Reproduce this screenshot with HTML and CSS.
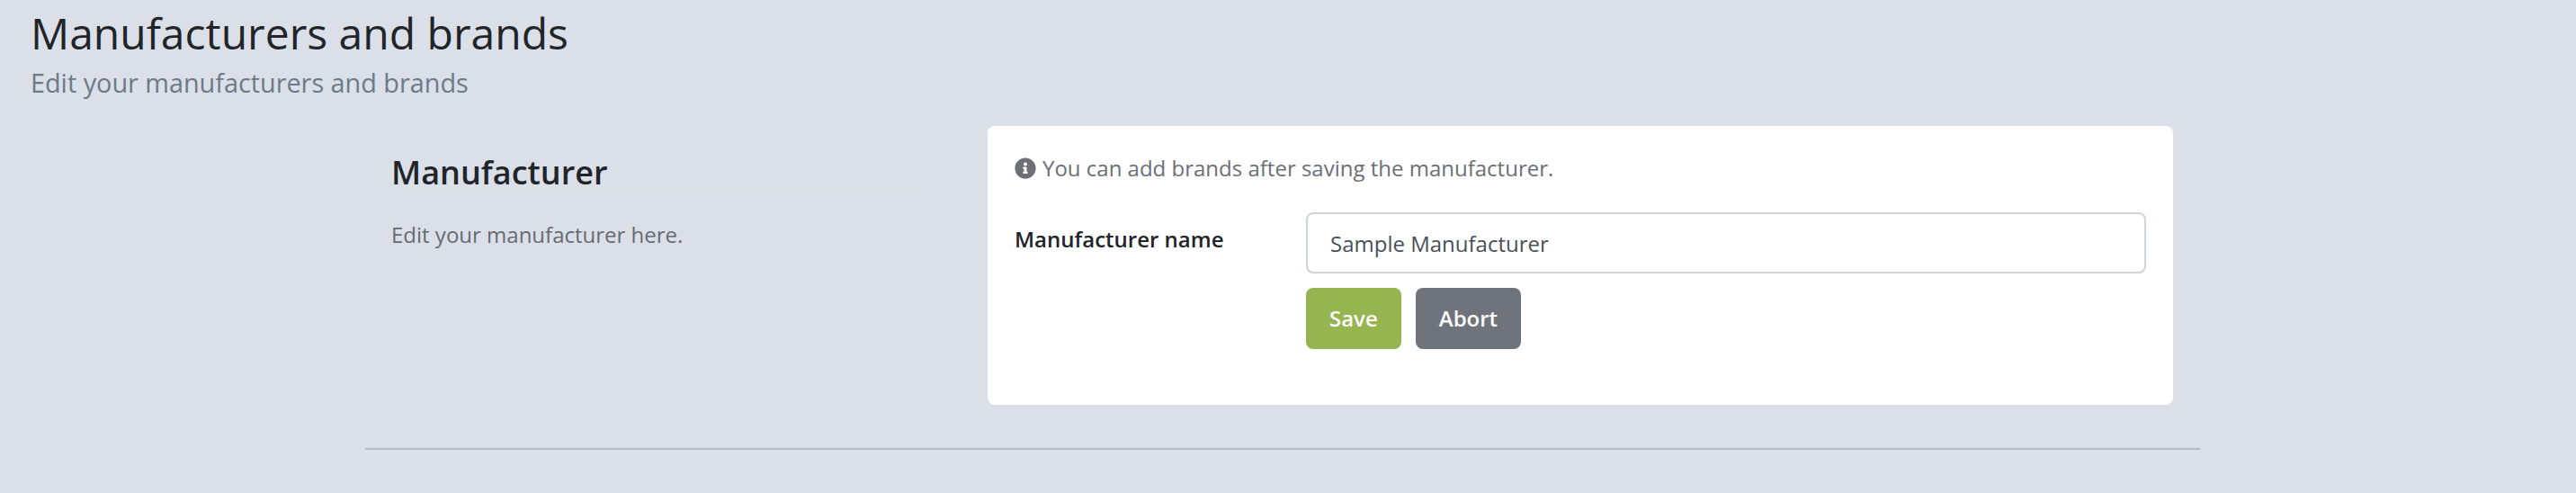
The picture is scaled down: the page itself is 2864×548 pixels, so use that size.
FILE: index.html
```html
<!DOCTYPE html>
<html lang="en">
<head>
    <meta charset="UTF-8">
    <title>Manufacturers and brands</title>
    <link rel="stylesheet" href="styles.css">
</head>
<body>
    <header class="page-header">
        <h1>Manufacturers and brands</h1>
        <p class="subtitle">Edit your manufacturers and brands</p>
    </header>

    <div class="content">
        <section class="form-section">
            <div class="section-info">
                <h2>Manufacturer</h2>
                <p>Edit your manufacturer here.</p>
            </div>

            <form class="card">
                <p class="note">
                    <svg class="note-icon" viewBox="0 0 512 512"><path d="M256 8C119.043 8 8 119.083 8 256c0 136.997 111.043 248 248 248s248-111.003 248-248C504 119.083 392.957 8 256 8zm0 110c23.196 0 42 18.804 42 42s-18.804 42-42 42-42-18.804-42-42 18.804-42 42-42zm56 254c0 6.627-5.373 12-12 12h-88c-6.627 0-12-5.373-12-12v-24c0-6.627 5.373-12 12-12h12v-64h-12c-6.627 0-12-5.373-12-12v-24c0-6.627 5.373-12 12-12h64c6.627 0 12 5.373 12 12v100h12c6.627 0 12 5.373 12 12v24z"/></svg>
                    You can add brands after saving the manufacturer.
                </p>

                <div class="form-row">
                    <label for="name">Manufacturer name</label>
                    <div class="form-field">
                        <input type="text" id="name" value="Sample Manufacturer">
                        <div class="buttons">
                            <button type="button" class="btn btn-save">Save</button>
                            <button type="button" class="btn btn-abort">Abort</button>
                        </div>
                    </div>
                </div>
            </form>
        </section>
        <hr class="divider">
    </div>
</body>
</html>
```

FILE: styles.css
```css
* {
    box-sizing: border-box;
}
html, body {
    height: 548px;
    overflow: hidden;
}
body {
    margin: 0;
    background: #dbdfe7;
    color: #212529;
    font-family: "Open Sans", sans-serif;
    font-size: 24px;
    line-height: 1.5;
}
.page-header {
    padding: 0 34px;
    height: 140px;
}
h1 {
    margin: 0;
    padding-top: 2px;
    font-size: 48px;
    font-weight: 400;
    line-height: 70px;
}
.subtitle {
    margin: 0;
    font-size: 28.8px;
    line-height: 40px;
    color: #6c7a89;
}
.content {
    margin: 0 418px 0 406px;
}
.form-section {
    display: flex;
}
.section-info {
    width: 692px;
    padding: 32px 72px 0 29px;
}
h2 {
    margin: 0 0 29px;
    border-bottom: 2px solid #e0e3e5;
    font-size: 36px;
    font-weight: 600;
    line-height: 40px;
}
.section-info p {
    margin: 0;
    color: #666b72;
}
.card {
    width: 1318px;
    height: 310px;
    padding: 29px 30px;
    background: #fff;
    border-radius: 8px;
}
.note {
    display: flex;
    align-items: center;
    gap: 7px;
    margin: 0 0 31px;
    color: #6c6f75;
}
.note-icon {
    width: 24px;
    height: 24px;
    fill: #6c6f75;
}
.form-row {
    display: flex;
}
label {
    width: 324px;
    padding-top: 12px;
    font-weight: 600;
}
.form-field {
    flex: 1;
}
input {
    display: block;
    width: 100%;
    height: 68px;
    padding: 0 25px;
    border: 2px solid #ced4da;
    border-radius: 8px;
    color: #495057;
    font: inherit;
}
.buttons {
    display: flex;
    gap: 16px;
    margin-top: 16px;
}
.btn {
    height: 68px;
    padding: 0 26px;
    border: 0;
    border-radius: 8px;
    color: #fff;
    font: inherit;
    font-weight: 600;
}
.btn-save {
    background: #96b450;
}
.btn-abort {
    background: #6f747c;
}
.divider {
    margin: 48px 0 0;
    border: 0;
    border-top: 2px solid #b4bcc4;
}
```
